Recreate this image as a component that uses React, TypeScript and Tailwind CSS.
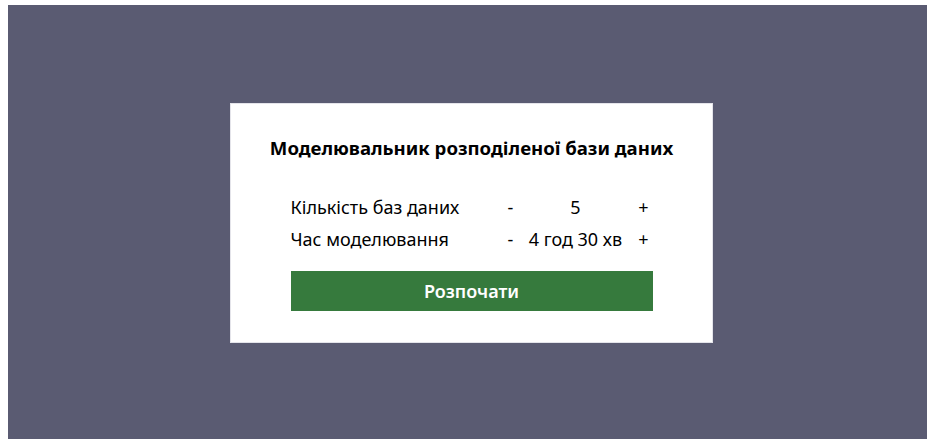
import { useState } from "react";

const formatTime = (minutes: number) => {
  const h = Math.floor(minutes / 60);
  const m = minutes % 60;
  return `${h} год ${m} хв`;
};

type StepperRowProps = {
  label: string;
  value: string;
  onDec: () => void;
  onInc: () => void;
};

const StepperRow = ({ label, value, onDec, onInc }: StepperRowProps) => (
  <div className="flex items-center h-8">
    <span className="w-[214px]">{label}</span>
    <button className="w-[12px] text-center" onClick={onDec}>
      -
    </button>
    <span className="w-[118px] text-center">{value}</span>
    <button className="w-[18px] text-center" onClick={onInc}>
      +
    </button>
  </div>
);

export default function App() {
  const [dbCount, setDbCount] = useState(5);
  const [minutes, setMinutes] = useState(270);

  return (
    <div className="pl-2 pt-[5px] bg-white overflow-hidden h-[439px]">
      <div
        className="w-[927px] h-[436px] bg-[#5a5b72] flex items-center justify-center text-black"
        style={{ fontFamily: '"Noto Sans", "Open Sans", sans-serif' }}
      >
        <div className="w-[483px] h-[240px] bg-white border border-[#e4e4ea] flex flex-col items-center">
          <h1 className="mt-[30px] text-[18.6px] leading-[28px] font-bold">
            Моделювальник розподіленої бази даних
          </h1>
          <div className="mt-[29px] w-[362px] text-[18px] leading-8">
            <StepperRow
              label="Кількість баз даних"
              value={String(dbCount)}
              onDec={() => setDbCount((n) => Math.max(1, n - 1))}
              onInc={() => setDbCount((n) => n + 1)}
            />
            <StepperRow
              label="Час моделювання"
              value={formatTime(minutes)}
              onDec={() => setMinutes((n) => Math.max(30, n - 30))}
              onInc={() => setMinutes((n) => n + 30)}
            />
          </div>
          <button className="mt-4 w-[362px] h-[40px] bg-[#367a3d] text-white text-[18px] font-semibold">
            Розпочати
          </button>
        </div>
      </div>
    </div>
  );
}
